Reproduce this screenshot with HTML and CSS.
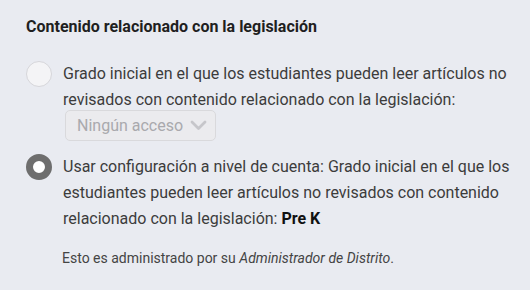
FILE: index.html
```html
<!DOCTYPE html>
<html lang="es">
<head>
<meta charset="utf-8">
<title>Contenido relacionado con la legislación</title>
<link rel="stylesheet" href="styles.css">
</head>
<body>
<section class="panel">
  <h2 class="title">Contenido relacionado con la legislación</h2>
  <div class="options">
    <div class="option">
      <span class="radio"></span>
      <div class="option-body">
        <p class="option-text">Grado inicial en el que los estudiantes pueden leer artículos no revisados con contenido relacionado con la legislación:</p>
        <div class="select">
          <span class="select-label">Ningún acceso</span>
          <svg class="chevron" width="17" height="11" viewBox="0 0 17 11"><path d="M2 2 L8.5 8.5 L15 2" fill="none" stroke="#c6c6ca" stroke-width="2.8" stroke-linecap="round" stroke-linejoin="round"/></svg>
        </div>
      </div>
    </div>
    <div class="option">
      <span class="radio radio-checked"></span>
      <div class="option-body">
        <p class="option-text">Usar configuración a nivel de cuenta: Grado inicial en el que los estudiantes pueden leer artículos no revisados con contenido relacionado con la legislación: <strong>Pre K</strong></p>
      </div>
    </div>
  </div>
  <p class="note">Esto es administrado por su <em>Administrador de Distrito</em>.</p>
</section>
</body>
</html>
```
FILE: styles.css
```css
html, body {
  margin: 0;
  padding: 0;
  background: #e9ebf1;
}
body {
  font-family: Roboto, "Noto Sans", sans-serif;
  color: #3a3a3a;
  width: 530px;
  height: 290px;
  overflow: hidden;
}
.panel {
  padding: 17px 20px 0 26px;
}
.title {
  margin: 0;
  font-size: 16px;
  font-weight: 700;
  line-height: 20px;
  color: #1f1f1f;
}
.options {
  display: flex;
  flex-direction: column;
  gap: 13px;
  margin-top: 24px;
}
.option {
  display: flex;
  gap: 11px;
  align-items: flex-start;
}
.radio {
  flex: none;
  width: 24px;
  height: 24px;
  border-radius: 50%;
  border: 1px solid #d6d6da;
  background: #f4f4f6;
}
.radio-checked {
  width: 12px;
  height: 12px;
  border: 7px solid #6e6e6e;
  background: #ffffff;
}
.option-body {
  display: flex;
  flex-direction: column;
  align-items: flex-start;
}
.option-text {
  margin: 0;
  font-size: 16px;
  line-height: 26px;
  color: #3c3c3c;
}
.option-text strong {
  color: #111;
}
.select {
  display: flex;
  align-items: center;
  justify-content: space-between;
  box-sizing: border-box;
  width: 151px;
  height: 31px;
  margin: -3px 0 0 2px;
  padding: 0 8px 0 11px;
  border: 1px solid #d9d9dc;
  border-radius: 5px;
  background: #ebebee;
}
.select-label {
  font-size: 16px;
  color: #a9a9ad;
}
.note {
  margin: 17px 0 0 36px;
  font-size: 14px;
  line-height: 18px;
  color: #444;
}
```
